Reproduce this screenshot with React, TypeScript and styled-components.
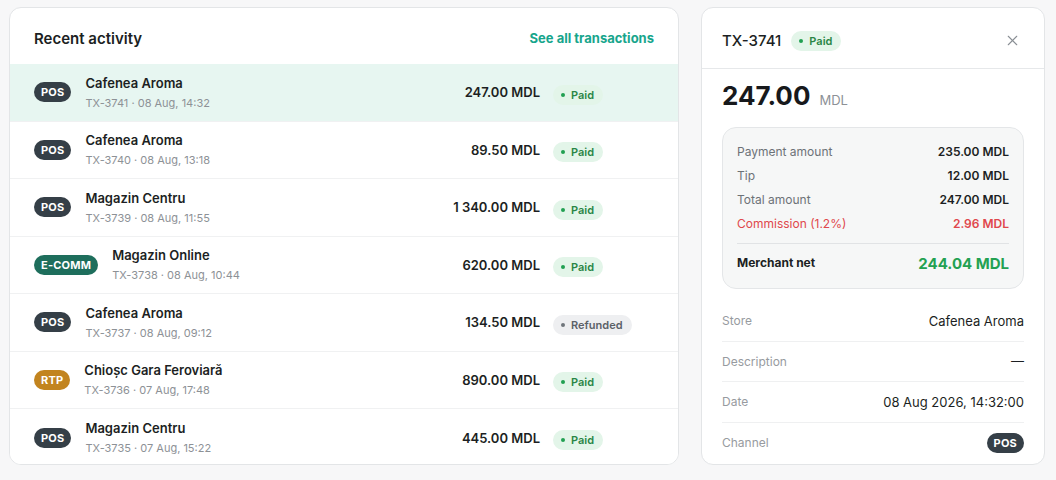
import React from "react";
import styled, { createGlobalStyle } from "styled-components";
import { X } from "lucide-react";

const GlobalStyle = createGlobalStyle`
  html, body {
    margin: 0;
    padding: 0;
    background: #f7f7f8;
    font-family: Inter, "Noto Sans", "Liberation Sans", sans-serif;
    color: #1c1f23;
  }
  * { box-sizing: border-box; }
`;

type Channel = "POS" | "E-COMM" | "RTP";
type Status = "Paid" | "Refunded";

interface Tx {
  id: string;
  store: string;
  when: string;
  amount: string;
  channel: Channel;
  status: Status;
}

const transactions: Tx[] = [
  { id: "TX-3741", store: "Cafenea Aroma", when: "08 Aug, 14:32", amount: "247.00 MDL", channel: "POS", status: "Paid" },
  { id: "TX-3740", store: "Cafenea Aroma", when: "08 Aug, 13:18", amount: "89.50 MDL", channel: "POS", status: "Paid" },
  { id: "TX-3739", store: "Magazin Centru", when: "08 Aug, 11:55", amount: "1 340.00 MDL", channel: "POS", status: "Paid" },
  { id: "TX-3738", store: "Magazin Online", when: "08 Aug, 10:44", amount: "620.00 MDL", channel: "E-COMM", status: "Paid" },
  { id: "TX-3737", store: "Cafenea Aroma", when: "08 Aug, 09:12", amount: "134.50 MDL", channel: "POS", status: "Refunded" },
  { id: "TX-3736", store: "Chioșc Gara Feroviară", when: "07 Aug, 17:48", amount: "890.00 MDL", channel: "RTP", status: "Paid" },
  { id: "TX-3735", store: "Magazin Centru", when: "07 Aug, 15:22", amount: "445.00 MDL", channel: "POS", status: "Paid" },
];

const channelColors: Record<Channel, string> = {
  POS: "#353f47",
  "E-COMM": "#1e6e5c",
  RTP: "#c2841f",
};

const Page = styled.div`
  display: grid;
  grid-template-columns: 670px 344px;
  gap: 22px;
  padding: 7px 0 0 9px;
  height: 480px;
`;

const Card = styled.section`
  background: #ffffff;
  border: 1px solid #e3e5e7;
  border-radius: 12px;
  height: 458px;
  overflow: hidden;
  display: flex;
  flex-direction: column;
`;

const ListHeader = styled.header`
  display: flex;
  justify-content: space-between;
  align-items: center;
  height: 56px;
  padding: 4px 24px 0;
  flex-shrink: 0;
`;

const Title = styled.h2`
  margin: 0;
  font-size: 15px;
  font-weight: 600;
  color: #1c1f23;
`;

const SeeAll = styled.a`
  font-size: 13px;
  font-weight: 700;
  color: #17a58c;
  cursor: pointer;
`;

const Row = styled.div<{ $active: boolean }>`
  display: flex;
  align-items: center;
  height: 57.5px;
  padding: 0 24px;
  flex-shrink: 0;
  background: ${(p) => (p.$active ? "#e7f6f1" : "#ffffff")};
  border-bottom: 1px solid #f0f1f2;
  &:last-child {
    border-bottom: none;
  }
`;

const ChannelBadge = styled.span<{ $channel: Channel }>`
  display: inline-flex;
  align-items: center;
  justify-content: center;
  height: 20px;
  padding: 0 7px;
  border-radius: 10px;
  background: ${(p) => channelColors[p.$channel]};
  color: #ffffff;
  font-size: 11px;
  font-weight: 700;
  letter-spacing: 0.2px;
  flex-shrink: 0;
`;

const RowInfo = styled.div`
  flex: 1;
  margin-left: 14px;
  display: flex;
  flex-direction: column;
  gap: 3px;
`;

const StoreName = styled.div`
  font-size: 13px;
  font-weight: 600;
  line-height: 18px;
  color: #1c1f23;
`;

const SubLine = styled.div`
  font-size: 11px;
  line-height: 16px;
  color: #8d9196;
`;

const Amount = styled.div`
  font-size: 13px;
  font-weight: 600;
  color: #1c1f23;
  text-align: right;
`;

const StatusCol = styled.div`
  width: 101px;
  margin-left: 13px;
  padding-top: 5px;
  display: flex;
`;

const StatusBadge = styled.span<{ $status: Status }>`
  display: inline-flex;
  align-items: center;
  gap: 6px;
  height: 20px;
  padding: 0 9px 0 8px;
  border-radius: 10px;
  font-size: 11px;
  font-weight: 600;
  background: ${(p) => (p.$status === "Paid" ? "#e3f5e9" : "#eeeff1")};
  color: ${(p) => (p.$status === "Paid" ? "#2a8646" : "#5b6168")};
  &::before {
    content: "";
    width: 4px;
    height: 4px;
    border-radius: 50%;
    background: ${(p) => (p.$status === "Paid" ? "#22a052" : "#6f757b")};
  }
`;

const DetailHeader = styled.header`
  display: flex;
  align-items: center;
  height: 61px;
  padding: 5px 20px 0;
  border-bottom: 1px solid #e6e8ea;
  flex-shrink: 0;
`;

const DetailId = styled.h3`
  margin: 0 10px 0 0;
  font-size: 15px;
  font-weight: 500;
  color: #1c1f23;
`;

const CloseButton = styled.button`
  margin-left: auto;
  margin-right: 3px;
  border: none;
  background: none;
  padding: 0;
  display: flex;
  color: #8a8f95;
  cursor: pointer;
`;

const BigAmount = styled.div`
  display: flex;
  align-items: baseline;
  gap: 9px;
  padding: 11px 20px 0;
  line-height: 32px;
`;

const BigValue = styled.span`
  font-size: 26px;
  font-weight: 700;
  color: #17191c;
`;

const BigCurrency = styled.span`
  font-size: 13px;
  color: #8d9196;
`;

const Breakdown = styled.div`
  margin: 11px 20px 0;
  padding: 11px 14px 14px;
  background: #f6f7f7;
  border: 1px solid #e4e6e8;
  border-radius: 14px;
`;

const BreakRow = styled.div<{ $tone?: "red" }>`
  display: flex;
  justify-content: space-between;
  align-items: center;
  height: 24px;
  font-size: 12px;
  color: ${(p) => (p.$tone === "red" ? "#e0474c" : "#6d7277")};
  & > b {
    font-weight: 600;
    color: ${(p) => (p.$tone === "red" ? "#e0474c" : "#1c1f23")};
  }
`;

const BreakDivider = styled.hr`
  border: none;
  border-top: 1px solid #e1e3e5;
  margin: 8px 0 6px;
`;

const NetRow = styled.div`
  display: flex;
  justify-content: space-between;
  align-items: center;
  height: 24px;
  font-size: 12px;
  font-weight: 700;
  color: #1c1f23;
`;

const NetValue = styled.span`
  font-size: 15px;
  font-weight: 700;
  color: #23a152;
  padding-top: 2px;
`;

const DetailList = styled.div`
  margin-top: 12px;
  padding: 0 20px;
`;

const DetailRow = styled.div`
  display: flex;
  justify-content: space-between;
  align-items: center;
  height: 40.5px;
  border-bottom: 1px solid #eff0f1;
  &:last-child {
    border-bottom: none;
  }
`;

const DetailLabel = styled.span`
  font-size: 12px;
  color: #979ba0;
`;

const DetailValue = styled.span`
  font-size: 13px;
  color: #1c1f23;
`;

const App: React.FC = () => {
  return (
    <>
      <GlobalStyle />
      <Page>
        <Card>
          <ListHeader>
            <Title>Recent activity</Title>
            <SeeAll>See all transactions</SeeAll>
          </ListHeader>
          {transactions.map((tx, i) => (
            <Row key={tx.id} $active={i === 0}>
              <ChannelBadge $channel={tx.channel}>{tx.channel}</ChannelBadge>
              <RowInfo>
                <StoreName>{tx.store}</StoreName>
                <SubLine>
                  {tx.id} · {tx.when}
                </SubLine>
              </RowInfo>
              <Amount>{tx.amount}</Amount>
              <StatusCol>
                <StatusBadge $status={tx.status}>{tx.status}</StatusBadge>
              </StatusCol>
            </Row>
          ))}
        </Card>

        <Card>
          <DetailHeader>
            <DetailId>TX-3741</DetailId>
            <StatusBadge $status="Paid">Paid</StatusBadge>
            <CloseButton aria-label="Close">
              <X size={17} strokeWidth={1.5} />
            </CloseButton>
          </DetailHeader>
          <BigAmount>
            <BigValue>247.00</BigValue>
            <BigCurrency>MDL</BigCurrency>
          </BigAmount>
          <Breakdown>
            <BreakRow>
              Payment amount <b>235.00 MDL</b>
            </BreakRow>
            <BreakRow>
              Tip <b>12.00 MDL</b>
            </BreakRow>
            <BreakRow>
              Total amount <b>247.00 MDL</b>
            </BreakRow>
            <BreakRow $tone="red">
              Commission (1.2%) <b>2.96 MDL</b>
            </BreakRow>
            <BreakDivider />
            <NetRow>
              Merchant net <NetValue>244.04 MDL</NetValue>
            </NetRow>
          </Breakdown>
          <DetailList>
            <DetailRow>
              <DetailLabel>Store</DetailLabel>
              <DetailValue>Cafenea Aroma</DetailValue>
            </DetailRow>
            <DetailRow>
              <DetailLabel>Description</DetailLabel>
              <DetailValue>—</DetailValue>
            </DetailRow>
            <DetailRow>
              <DetailLabel>Date</DetailLabel>
              <DetailValue>08 Aug 2026, 14:32:00</DetailValue>
            </DetailRow>
            <DetailRow>
              <DetailLabel>Channel</DetailLabel>
              <ChannelBadge $channel="POS">POS</ChannelBadge>
            </DetailRow>
          </DetailList>
        </Card>
      </Page>
    </>
  );
};

export default App;
